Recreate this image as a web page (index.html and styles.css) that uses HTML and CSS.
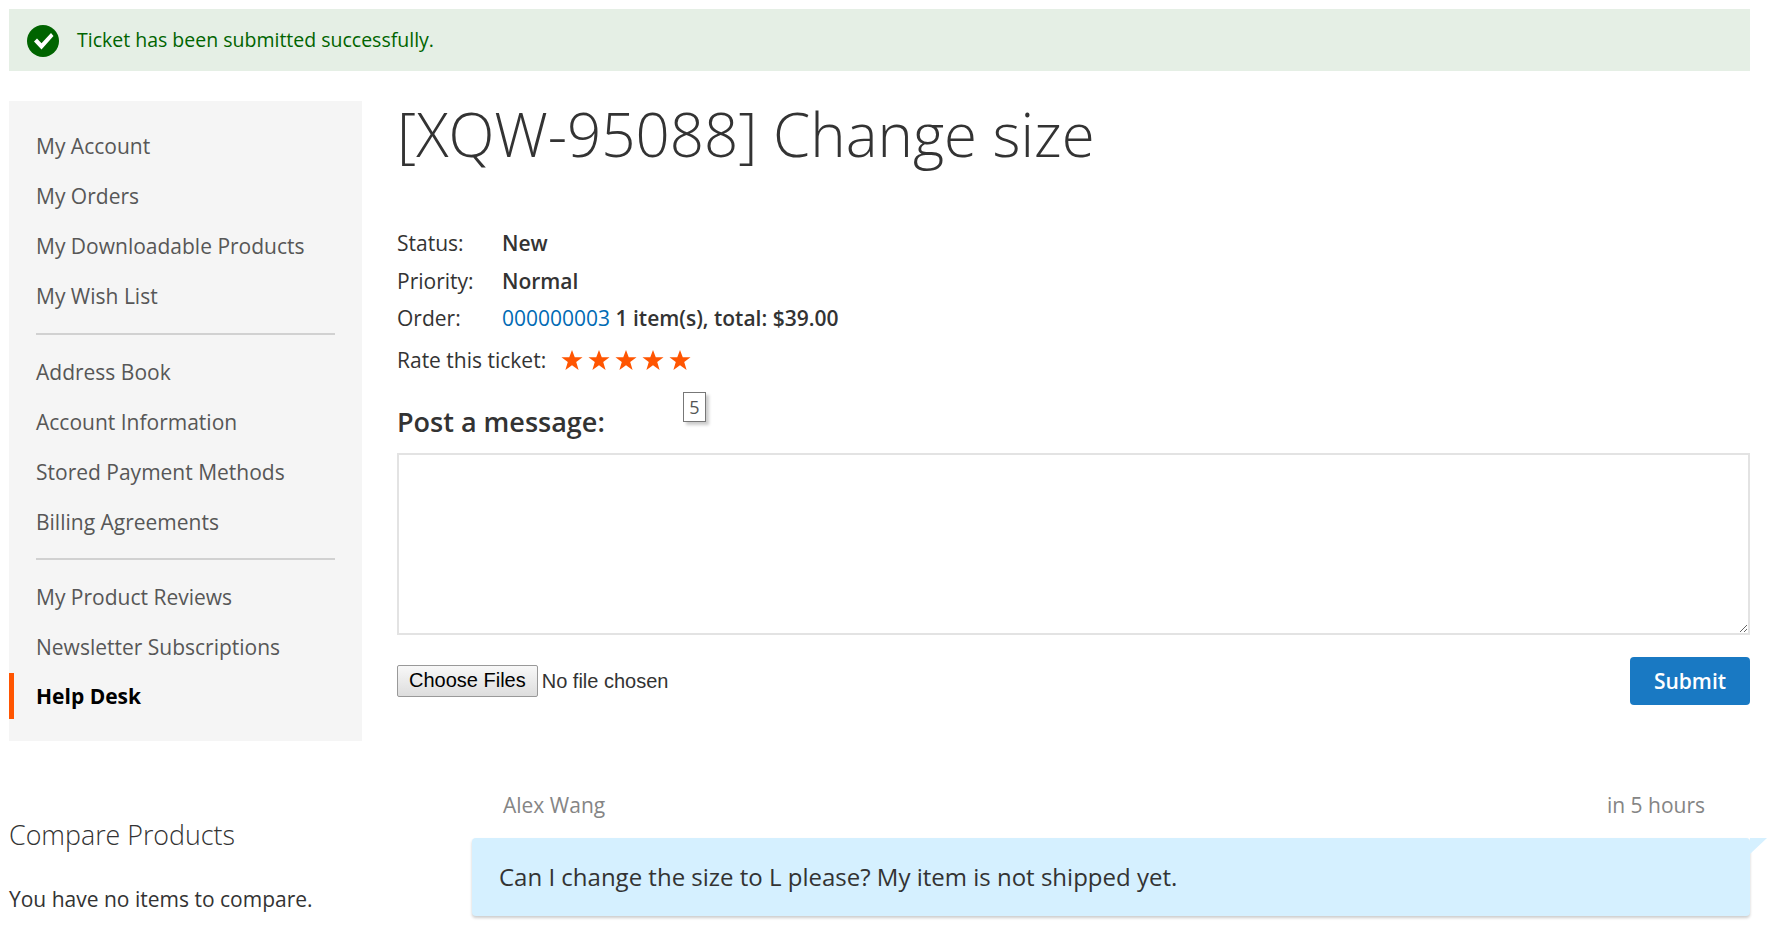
FILE: index.html
```html
<!DOCTYPE html>
<html lang="en">
<head>
<meta charset="utf-8">
<title>[XQW-95088] Change size</title>
<link rel="stylesheet" href="styles.css">
</head>
<body>
<div class="message">
  <svg class="message-icon" viewBox="0 0 32 32" width="32" height="32" aria-hidden="true"><circle cx="16" cy="16" r="16" fill="#006400"/><path d="M7 16.500l3-3 4.500 4.700L24 8l2.500 3L14.500 24.500z" fill="#fff"/></svg>
  <span class="message-text">Ticket has been submitted successfully.</span>
</div>
<div class="columns">
  <aside class="side">
    <nav class="nav">
      <ul class="nav-group">
        <li><a>My Account</a></li>
        <li><a>My Orders</a></li>
        <li><a>My Downloadable Products</a></li>
        <li><a>My Wish List</a></li>
      </ul>
      <ul class="nav-group">
        <li><a>Address Book</a></li>
        <li><a>Account Information</a></li>
        <li><a>Stored Payment Methods</a></li>
        <li><a>Billing Agreements</a></li>
      </ul>
      <ul class="nav-group">
        <li><a>My Product Reviews</a></li>
        <li><a>Newsletter Subscriptions</a></li>
        <li class="current"><a>Help Desk</a></li>
      </ul>
    </nav>
    <div class="compare">
      <h2 class="compare-title">Compare Products</h2>
      <p class="compare-empty">You have no items to compare.</p>
    </div>
  </aside>
  <main class="main">
    <h1 class="title">[XQW-95088] Change size</h1>
    <dl class="facts">
      <dt>Status:</dt><dd>New</dd>
      <dt>Priority:</dt><dd>Normal</dd>
      <dt>Order:</dt><dd><a class="link">000000003</a> 1 item(s), total: $39.00</dd>
    </dl>
    <div class="rate">
      <span>Rate this ticket:</span>
      <span class="stars">
        <svg class="star" viewBox="0 0 24 24" aria-hidden="true"><path d="M12 1l3 8h8.500l-6.900 5.200 2.600 8.800L12 17.800 4.800 23l2.600-8.800L.5 9H9z"/></svg>
        <svg class="star" viewBox="0 0 24 24" aria-hidden="true"><path d="M12 1l3 8h8.500l-6.900 5.200 2.600 8.800L12 17.800 4.800 23l2.600-8.800L.5 9H9z"/></svg>
        <svg class="star" viewBox="0 0 24 24" aria-hidden="true"><path d="M12 1l3 8h8.500l-6.900 5.200 2.600 8.800L12 17.800 4.800 23l2.600-8.800L.5 9H9z"/></svg>
        <svg class="star" viewBox="0 0 24 24" aria-hidden="true"><path d="M12 1l3 8h8.500l-6.900 5.200 2.600 8.800L12 17.800 4.800 23l2.600-8.800L.5 9H9z"/></svg>
        <svg class="star" viewBox="0 0 24 24" aria-hidden="true"><path d="M12 1l3 8h8.500l-6.900 5.200 2.600 8.800L12 17.800 4.800 23l2.600-8.800L.5 9H9z"/></svg>
      </span>
      <span class="tip">5</span>
    </div>
    <h2 class="post-title">Post a message:</h2>
    <textarea class="post-box"></textarea>
    <div class="post-actions">
      <input class="files" type="file" multiple>
      <button class="submit" type="button">Submit</button>
    </div>
    <article class="reply">
      <header class="reply-head"><span>Alex Wang</span><span>in 5 hours</span></header>
      <div class="bubble">Can I change the size to L please? My item is not shipped yet.</div>
    </article>
  </main>
</div>
</body>
</html>
```
FILE: styles.css
```css
* { box-sizing: border-box; }
html, body { margin: 0; height: 933px; overflow: hidden; background: #fff; }
body {
  padding: 9px 20px 0 9px;
  font-family: "Open Sans", sans-serif;
  font-size: 21px;
  color: #333;
}
.message {
  display: flex;
  align-items: center;
  gap: 18px;
  height: 62px;
  padding-left: 18px;
  background: #e5efe5;
  color: #006400;
  font-size: 19.5px;
}
.message-icon { flex: none; margin-top: 2px; }
.message-text { margin-top: -2px; }
.columns { display: flex; margin-top: 30px; }
.side { flex: none; width: 353px; margin-right: 35px; }
.nav { background: #f5f5f5; padding: 20px 0 15px; height: 640px; }
.nav-group { list-style: none; margin: 0 27px; padding: 0; }
.nav-group + .nav-group { border-top: 2px solid #d1d1d1; margin-top: 11.500px; padding-top: 12px; }
.nav-group li { height: 50px; line-height: 50px; color: #575757; }
.nav-group .current {
  margin-left: -27px;
  color: #000;
  font-weight: 700;
  border-left: 5px solid #ff5501;
  padding-left: 22px;
  height: 46px;
  line-height: 46px;
  margin-top: 1px;
}
.compare { margin-top: 75px; }
.compare-title { margin: 0; font-size: 26.8px; font-weight: 300; line-height: 38px; color: #333; }
.compare-empty { margin: 31px 0 0; line-height: 28px; }
.main { flex: 1; position: relative; min-width: 0; }
.title { margin: -2px 0 0; font-size: 60px; font-weight: 300; line-height: 70px; color: #333; }
.facts {
  display: grid;
  grid-template-columns: 105px 1fr;
  margin: 60px 0 0;
  row-gap: 9.700px;
  line-height: 28px;
}
.facts dt { font-weight: 400; }
.facts dd { margin: 0; font-weight: 600; color: #333; }
.link { color: #006bb4; font-weight: 400; }
.rate { display: flex; align-items: center; gap: 15px; margin-top: 14px; line-height: 28px; }
.stars { display: flex; gap: 5px; }
.star { width: 22px; height: 22px; fill: #ff5501; display: block; }
.tip {
  position: absolute;
  left: 286px;
  top: 291px;
  width: 23px;
  height: 30px;
  border: 1px solid #777;
  background: #fff;
  box-shadow: 3px 3px 3px #ccc;
  font-size: 18px;
  line-height: 28px;
  text-align: center;
  color: #555;
}
.post-title { margin: 30px 0 0; font-size: 27px; font-weight: 600; line-height: 36px; }
.post-box {
  display: block;
  width: 100%;
  height: 182px;
  margin-top: 13px;
  border: 2px solid #e3e3e3;
  background: #fff;
  padding: 8px;
  font: inherit;
}
.post-actions { display: flex; align-items: center; justify-content: space-between; margin-top: 21.600px; }
.files { font-family: "Liberation Sans", sans-serif; font-size: 20px; color: #333; }
.files::file-selector-button {
  font: inherit;
  color: #000;
  height: 32px;
  padding: 0 11px;
  margin-right: 4px;
  border: 1px solid #999;
  border-radius: 2px;
  background: linear-gradient(#f8f8f8, #ddd);
}
.submit {
  width: 120px;
  height: 48px;
  border: 0;
  border-radius: 4px;
  background: #1979c3;
  color: #fff;
  font-family: inherit;
  font-size: 21px;
  font-weight: 600;
}
.reply { margin: 86px 0 0 75px; }
.reply-head { display: flex; justify-content: space-between; padding: 0 45px 0 31px; line-height: 28px; color: #858585; }
.bubble {
  position: relative;
  margin: 19px 0 0;
  height: 78px;
  padding: 0 27px;
  line-height: 78px;
  font-size: 24px;
  background: #d5f0ff;
  border-radius: 4px;
  box-shadow: 0 2px 3px rgba(0,0,0,.2);
}
.bubble::after {
  content: "";
  position: absolute;
  left: 100%;
  top: 0;
  border-style: solid;
  border-width: 16px 17px 0 0;
  border-color: #d5f0ff transparent transparent transparent;
}
```
